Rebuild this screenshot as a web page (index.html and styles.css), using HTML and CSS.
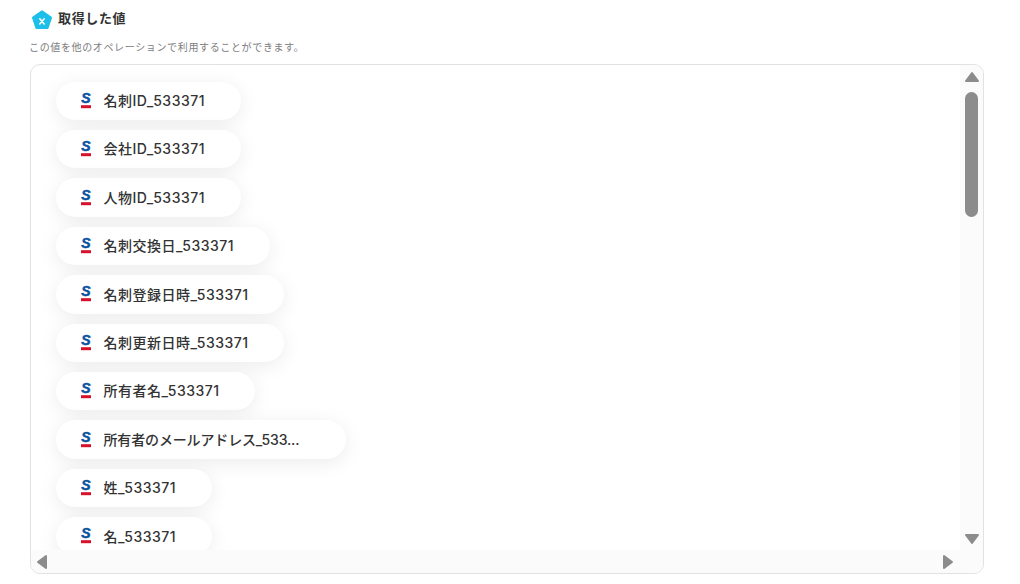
FILE: index.html
```html
<!DOCTYPE html>
<html lang="ja">
<head>
<meta charset="utf-8">
<title>取得した値</title>
<link rel="stylesheet" href="styles.css">
</head>
<body>
<section class="panel">
  <h2 class="title">
    <svg class="title-icon" width="22" height="22" viewBox="0 0 22 22"><path d="M11 2.2 20 8.6 16.6 19H5.4L2 8.6Z" fill="#1cbfe9" stroke="#1cbfe9" stroke-width="2" stroke-linejoin="round"/><path d="M8.8 9.8 13.2 15M13.2 9.8 8.8 15" stroke="#fff" stroke-width="1.6" stroke-linecap="round"/></svg>
    <span class="title-text">取得した値</span>
  </h2>
  <p class="note">この値を他のオペレーションで利用することができます。</p>
  <div class="box">
    <div class="viewport">
      <ul class="list">
        <li class="pill w185"><svg class="logo" viewBox="0 0 12 20"><text x="6" y="13" text-anchor="middle" class="logo-s">S</text><rect x="1" y="15.2" width="10" height="3" fill="#d8112b"/></svg><span class="label">名刺ID_533371</span></li>
        <li class="pill w185"><svg class="logo" viewBox="0 0 12 20"><text x="6" y="13" text-anchor="middle" class="logo-s">S</text><rect x="1" y="15.2" width="10" height="3" fill="#d8112b"/></svg><span class="label">会社ID_533371</span></li>
        <li class="pill w185"><svg class="logo" viewBox="0 0 12 20"><text x="6" y="13" text-anchor="middle" class="logo-s">S</text><rect x="1" y="15.2" width="10" height="3" fill="#d8112b"/></svg><span class="label">人物ID_533371</span></li>
        <li class="pill w214"><svg class="logo" viewBox="0 0 12 20"><text x="6" y="13" text-anchor="middle" class="logo-s">S</text><rect x="1" y="15.2" width="10" height="3" fill="#d8112b"/></svg><span class="label">名刺交換日_533371</span></li>
        <li class="pill w228"><svg class="logo" viewBox="0 0 12 20"><text x="6" y="13" text-anchor="middle" class="logo-s">S</text><rect x="1" y="15.2" width="10" height="3" fill="#d8112b"/></svg><span class="label">名刺登録日時_533371</span></li>
        <li class="pill w228"><svg class="logo" viewBox="0 0 12 20"><text x="6" y="13" text-anchor="middle" class="logo-s">S</text><rect x="1" y="15.2" width="10" height="3" fill="#d8112b"/></svg><span class="label">名刺更新日時_533371</span></li>
        <li class="pill w199"><svg class="logo" viewBox="0 0 12 20"><text x="6" y="13" text-anchor="middle" class="logo-s">S</text><rect x="1" y="15.2" width="10" height="3" fill="#d8112b"/></svg><span class="label">所有者名_533371</span></li>
        <li class="pill w290"><svg class="logo" viewBox="0 0 12 20"><text x="6" y="13" text-anchor="middle" class="logo-s">S</text><rect x="1" y="15.2" width="10" height="3" fill="#d8112b"/></svg><span class="label tight">所有者のメールアドレス_533...</span></li>
        <li class="pill w156"><svg class="logo" viewBox="0 0 12 20"><text x="6" y="13" text-anchor="middle" class="logo-s">S</text><rect x="1" y="15.2" width="10" height="3" fill="#d8112b"/></svg><span class="label">姓_533371</span></li>
        <li class="pill w156"><svg class="logo" viewBox="0 0 12 20"><text x="6" y="13" text-anchor="middle" class="logo-s">S</text><rect x="1" y="15.2" width="10" height="3" fill="#d8112b"/></svg><span class="label">名_533371</span></li>
      </ul>
    </div>
    <div class="vbar">
      <svg class="arrow" width="16" height="12" viewBox="0 0 16 12"><path d="M8 2 14 10H2Z" fill="#8c8c8c" stroke="#8c8c8c" stroke-width="2" stroke-linejoin="round"/></svg>
      <div class="thumb"></div>
      <svg class="arrow arrow-down" width="16" height="12" viewBox="0 0 16 12"><path d="M8 10 14 2H2Z" fill="#8c8c8c" stroke="#8c8c8c" stroke-width="2" stroke-linejoin="round"/></svg>
    </div>
    <div class="hbar">
      <svg width="12" height="16" viewBox="0 0 12 16"><path d="M2 8 10 2V14Z" fill="#8c8c8c" stroke="#8c8c8c" stroke-width="2" stroke-linejoin="round"/></svg>
      <svg width="12" height="16" viewBox="0 0 12 16"><path d="M10 8 2 2V14Z" fill="#8c8c8c" stroke="#8c8c8c" stroke-width="2" stroke-linejoin="round"/></svg>
    </div>
  </div>
</section>
</body>
</html>
```

FILE: styles.css
```css
* { box-sizing: border-box; }
html, body { margin: 0; height: 100%; background: #fff; overflow: hidden; }
body { font-family: Inter, "Noto Sans CJK JP", "Noto Sans", sans-serif; color: #2b2b2b; letter-spacing: .04em; }
.panel { padding: 7px 36px 0 30px; }
.title { display: flex; align-items: center; gap: 5px; margin: 0 0 0 1px; height: 22px; font-size: 13px; font-weight: 600; color: #333; }
.title-icon { margin-top: 4px; }
.title-text { margin-bottom: 2px; }
.note { margin: 11px 0 0 -1px; height: 14px; line-height: 14px; font-size: 10px; color: #7c7c7c; }
.box { display: grid; grid-template-columns: 1fr 23px; grid-template-rows: 1fr 23px; height: 510px; margin-top: 10px; border: 1px solid #e2e2e2; border-radius: 10px; overflow: hidden; }
.viewport { overflow: hidden; padding: 16.6px 0 0 25px; }
.list { list-style: none; margin: 0; padding: 0; display: flex; flex-direction: column; gap: 10px; }
.pill { display: flex; align-items: center; flex: none; height: 38.4px; padding-left: 24px; border-radius: 20px; background: #fff; box-shadow: 0 4px 20px rgba(0, 0, 0, .08); font-size: 14px; font-weight: 500; color: #333; white-space: nowrap; }
.label { margin: 0 0 1.5px .5px; letter-spacing: .5px; }
.tight { letter-spacing: -.15px; }
.w185 { width: 185px; }
.w214 { width: 214px; }
.w228 { width: 228px; }
.w199 { width: 199px; }
.w290 { width: 290px; }
.w156 { width: 156px; }
.logo { width: 12px; height: 20px; margin: 0 11px 2px 0; flex: none; }
.logo-s { font: italic 700 14px "Liberation Sans", sans-serif; fill: #0a52a0; stroke: #0a52a0; stroke-width: .5; letter-spacing: 0; }
.vbar { display: flex; flex-direction: column; align-items: center; padding: 6px 0 5px; background: #fbfbfb; }
.thumb { width: 13px; height: 125px; margin-top: 9px; border-radius: 7px; background: #8c8c8c; }
.arrow-down { margin-top: auto; }
.hbar { grid-column: 1 / -1; display: flex; align-items: center; justify-content: space-between; padding: 0 29px 0 5px; background: #fbfbfb; }
```
